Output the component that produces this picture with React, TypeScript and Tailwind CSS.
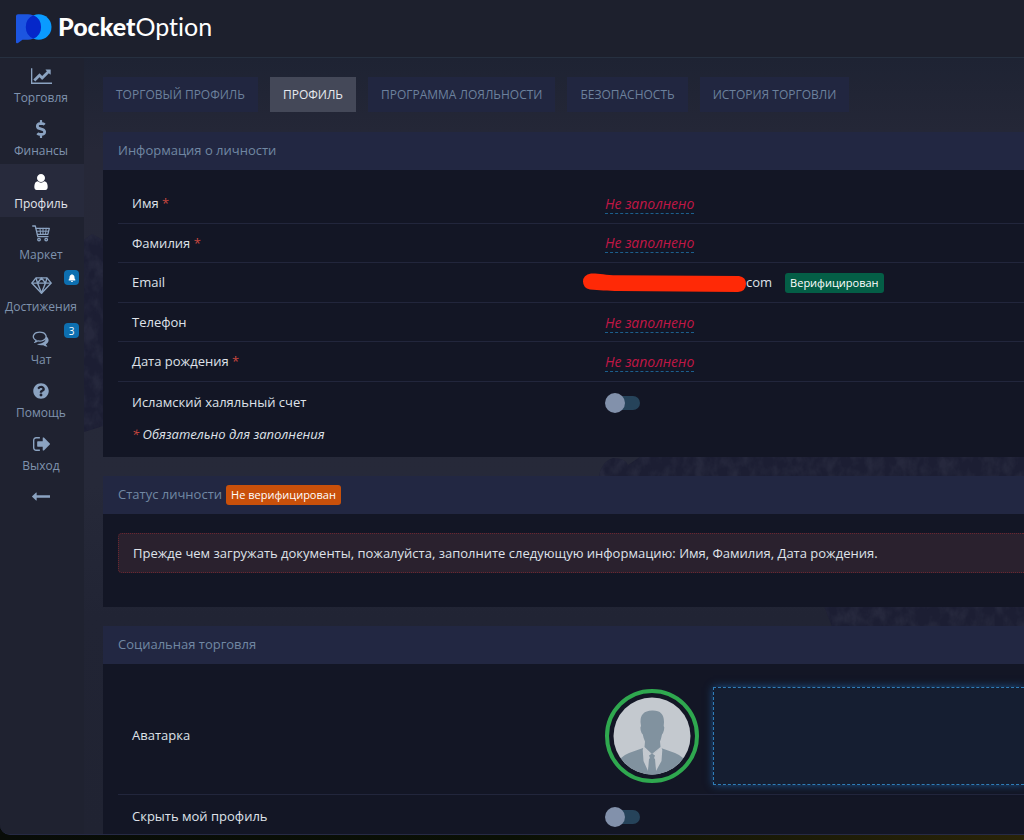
import React from "react";
import { FaBell, FaDollarSign, FaQuestionCircle } from "react-icons/fa";

type GlyphProps = { d: string; box: string; className: string };

function Glyph({ d, box, className }: GlyphProps) {
  return (
    <svg viewBox={box} className={className} fill="currentColor" aria-hidden="true">
      <path d={d} />
    </svg>
  );
}

const CHART =
  "M1920 1536v128h-2048v-1536h128v1408h1920zm-128-1248v435q0 21-19.5 29.5t-35.5-7.5l-121-121-633 633q-10 10-23 10t-23-10l-233-233-416 416-192-192 585-585q10-10 23-10t23 10l233 233 464-464-121-121q-16-16-7.5-35.5t29.5-19.5h435q14 0 23 9t9 23z";
const USER =
  "M1536 1399q0 109-62.5 187t-150.5 78h-854q-88 0-150.5-78t-62.5-187q0-85 8.5-160.5t31.5-152 58.5-131 94-89 134.5-34.5q131 128 313 128t313-128q76 0 134.5 34.5t94 89 58.5 131 31.5 152 8.5 160.5zm-256-887q0 159-112.5 271.5t-271.5 112.5-271.5-112.5-112.5-271.5 112.5-271.5 271.5-112.5 271.5 112.5 112.5 271.5z";
const CHAT =
  "M768 384q-153 0-286 52t-211.5 141-78.5 191q0 82 53 158t149 132l97 56-35 84q34-20 62-39l44-31 53 10q78 14 153 14 153 0 286-52t211.5-141 78.5-191-78.5-191-211.5-141-286-52zm0-128q191 0 353.5 68.5t256.5 186.5 94 257-94 257-256.5 186.5-353.5 68.5q-86 0-176-16-124 88-278 128-36 9-86 16h-3q-11 0-20.5-8t-11.5-21q-1-3-1-6.5t.5-6.5 2-6l2.5-5 3.5-5.5 4-5 4.5-5 4-4.5q5-6 23-25t26-29.5 22.5-29 25-38.5 20.5-44q-124-72-195-177t-71-224q0-139 94-257t256.5-186.5 353.5-68.5zm616 1276q10 24 20.5 44t25 38.5 22.5 29 26 29.5 23 25q1 1 4 4.5t4.5 5 4 5 3.5 5.5l2.5 5t2 6 .5 6.5-1 6.5q-3 14-13 22t-22 7q-50-7-86-16-154-40-278-128-90 16-176 16-271 0-472-132 58 4 88 4 161 0 309-45t264-129q125-92 192-212t67-254q0-77-23-152 129 71 204 178t75 230q0 120-71 224.5t-195 176.5z";
const EXIT =
  "M704 1440q0 4 1 20t.5 26.5-3 23.5-10 19.5-20.5 6.5h-320q-119 0-203.5-84.5t-84.5-203.5v-704q0-119 84.5-203.5t203.5-84.5h320q13 0 22.5 9.5t9.5 22.5q0 4 1 20t.5 26.5-3 23.5-10 19.5-20.5 6.5h-320q-66 0-113 47t-47 113v704q0 66 47 113t113 47h312l11.5 1 11.5 3 8 5.5 7 9 2 13.5zm928-544q0 26-19 45l-544 544q-19 19-45 19t-45-19-19-45v-288h-448q-26 0-45-19t-19-45v-384q0-26 19-45t45-19h448v-288q0-26 19-45t45-19 45 19l544 544q19 19 19 45z";
const ARROW =
  "M1792 832v192q0 14-9 23t-23 9h-1248v224q0 21-19 29t-35-5l-384-350q-10-10-10-23 0-14 10-24l384-354q16-14 35-6 19 9 19 29v224h1248q14 0 23 9t9 23z";

function Diamond() {
  return (
    <svg viewBox="0 0 21 17" className="h-[17px] w-[21px]" fill="none" stroke="currentColor" strokeWidth="1.4" strokeLinejoin="round" aria-hidden="true">
      <path d="M5 .9h11l4.2 5.2L10.5 16.2.8 6.100z" />
      <path d="M.8 6.100h19.400M5 .9l1.500 5.200 4 10 4-10L16 .9M6.500 6.100l4-5.100 4 5.100" />
    </svg>
  );
}

function Cart() {
  return (
    <svg viewBox="0 0 18 17" className="h-[17px] w-[18px]" fill="none" stroke="currentColor" strokeWidth="1.3" strokeLinecap="round" strokeLinejoin="round" aria-hidden="true">
      <path d="M.7 1h2.600l2.500 10.600h10.200" />
      <path d="M4 3.300h13.300l-1.500 6H5.400" />
      <path d="M4.700 6.200h11.800M8 3.300l.5 6M11 3.300v6M14.200 3.300l-.7 6" strokeWidth="1" />
      <circle cx="7" cy="14.600" r="1.300" />
      <circle cx="14.200" cy="14.600" r="1.300" />
    </svg>
  );
}

type NavItem = { label: string; icon: React.ReactNode; badge?: React.ReactNode; active?: boolean; short?: boolean };

const NAV: NavItem[] = [
  { label: "Торговля", icon: <Glyph d={CHART} box="-128 128 2048 1536" className="h-4 w-[21px]" /> },
  { label: "Финансы", icon: <FaDollarSign className="size-[18px]" /> },
  { label: "Профиль", icon: <Glyph d={USER} box="256 128 1280 1536" className="h-4 w-[14px]" />, active: true },
  { label: "Маркет", icon: <Cart />, short: true },
  { label: "Достижения", icon: <Diamond />, badge: <FaBell className="size-2" /> },
  { label: "Чат", icon: <Glyph d={CHAT} box="0 128 1792 1664" className="h-[17px] w-[18px]" />, badge: "3" },
  { label: "Помощь", icon: <FaQuestionCircle className="size-4" /> },
  { label: "Выход", icon: <Glyph d={EXIT} box="64 256 1568 1280" className="h-[14px] w-[17px]" /> },
];

function Sidebar() {
  return (
    <nav className="flex w-[84px] shrink-0 flex-col bg-[#1f2230] text-[#8ba3c1]">
      {NAV.map((n) => (
        <a
          key={n.label}
          href="#"
          className={`relative flex flex-col items-center gap-[3px] pr-[2px] ${n.short ? "h-[50px] pt-[7px]" : "h-[53px] pt-[9px]"} ${n.active ? "bg-[#272a3c] text-white" : ""}`}
        >
          <span className="flex h-[18px] items-center">{n.icon}</span>
          <span className={`text-xs leading-5 ${n.active ? "text-[#e4e7ee]" : "text-[#7f93ae]"}`}>{n.label}</span>
          {n.badge && (
            <span className="absolute top-[3px] right-[5px] flex h-[15px] w-[15px] items-center justify-center rounded bg-[#0d6fb0] text-[10px] leading-none text-white">
              {n.badge}
            </span>
          )}
        </a>
      ))}
      <button type="button" aria-label="Свернуть" className="flex h-[34px] items-center justify-center pr-[2px]">
        <Glyph d={ARROW} box="64 512 1728 832" className="h-[9px] w-[18px]" />
      </button>
    </nav>
  );
}

function Logo() {
  return (
    <a href="#" className="flex items-center gap-[6px]">
      <svg viewBox="0 0 36 30" className="h-[30px] w-9" aria-hidden="true">
        <circle cx="22.700" cy="13" r="12.800" fill="#0a9bff" />
        <path d="M0 2Q0 .2 2 .2h10a12.800 12.800 0 0 1 0 25.600H6.500L2 29Q0 30 0 28z" fill="#1c55e0" />
        <path d="M17.400 1.300a12.800 12.800 0 0 1 0 23.400a12.800 12.800 0 0 1 0-23.400z" fill="#0527c9" />
      </svg>
      <span className="pb-[5px] font-[Lato,sans-serif] text-[25px] leading-[30px] text-white [font-variant-ligatures:none]">
        <span className="font-black">Pocket</span>
        <span className="font-normal">Option</span>
      </span>
    </a>
  );
}

const TABS = ["Торговый профиль", "Профиль", "Программа лояльности", "Безопасность", "История торговли"];

function Panel({ title, badge, children }: { title: string; badge?: string; children: React.ReactNode }) {
  return (
    <section className="relative">
      <h2 className="flex h-[38px] items-center gap-1 bg-[#222742] px-[15px] text-[#7187a3]">
        {title}
        {badge && <span className="rounded-[3px] bg-[#c9500a] px-[5px] text-[11px] leading-5 text-white">{badge}</span>}
      </h2>
      <div className="bg-[#131625] pl-[15px]">{children}</div>
    </section>
  );
}

function Empty() {
  return (
    <button type="button" className="border-b border-dashed border-[#1c5f8d] text-sm leading-[19px] text-[#c01745] italic">
      Не заполнено
    </button>
  );
}

function Toggle({ id }: { id: string }) {
  return (
    <input
      id={id}
      type="checkbox"
      role="switch"
      className="relative block h-5 w-[35px] appearance-none before:absolute before:top-[3px] before:right-0 before:h-[14px] before:w-[30px] before:rounded-full before:bg-[#26435a] after:absolute after:top-0 after:left-0 after:size-5 after:rounded-full after:bg-[#8291ab]"
    />
  );
}

function Email() {
  return (
    <span className="relative flex items-center gap-[13px] pl-[141px]">
      <svg viewBox="0 0 164 20" className="absolute top-0 -left-[22px] h-5 w-[164px]" aria-hidden="true">
        <path d="M8 .5C14 0 22 2 34 2.200L156 3q7 1 7 8t-8 8L36 18C24 18 16 17 7 16.500Q0 15 0 8.500T8 .5z" fill="#ff2906" />
      </svg>
      com
      <span className="rounded-[3px] bg-[#045e46] px-[5px] text-[11px] leading-5 text-white">Верифицирован</span>
    </span>
  );
}

const ROWS: { label: string; required?: boolean; value: React.ReactNode }[] = [
  { label: "Имя", required: true, value: <Empty /> },
  { label: "Фамилия", required: true, value: <Empty /> },
  { label: "Email", value: <Email /> },
  { label: "Телефон", value: <Empty /> },
  { label: "Дата рождения", required: true, value: <Empty /> },
];

const RIDGE = "M0 182l8-6 11 6V368L0 374zM515 418q3-15 14-18 12 0 15 7l12-8 40-4H940V777H830L740 548l-60-20-165-90z";

function Backdrop() {
  return (
    <svg className="absolute inset-0 h-full w-full" viewBox="0 0 940 777" preserveAspectRatio="xMinYMin slice" aria-hidden="true">
      <defs>
        <linearGradient id="sky" x1="0" y1="0" x2="0" y2="1">
          <stop offset="0" stopColor="#1e2333" />
          <stop offset=".12" stopColor="#262838" />
          <stop offset=".55" stopColor="#262939" />
          <stop offset=".72" stopColor="#212434" />
          <stop offset="1" stopColor="#202332" />
        </linearGradient>
        <filter id="rock" x="0" y="0" width="1" height="1" colorInterpolationFilters="sRGB">
          <feTurbulence type="fractalNoise" baseFrequency=".09 .06" numOctaves="4" seed="4" />
          <feColorMatrix values="0 0 0 0 .18  0 0 0 0 .19  0 0 0 0 .27  0 2.400 0 0 -.9" />
          <feComposite in2="SourceGraphic" operator="in" />
        </filter>
      </defs>
      <rect width="940" height="777" fill="url(#sky)" />
      <path d={RIDGE} fill="#1c1e33" />
      <path d={RIDGE} filter="url(#rock)" opacity=".6" />
    </svg>
  );
}

function Avatar() {
  return (
    <svg viewBox="0 0 94 94" className="size-[94px] shrink-0" role="img" aria-label="Аватарка">
      <defs>
        <clipPath id="face">
          <circle cx="47" cy="47" r="38.500" />
        </clipPath>
      </defs>
      <circle cx="47" cy="47" r="45" fill="none" stroke="#2fa84f" strokeWidth="4" />
      <g clipPath="url(#face)">
        <rect width="94" height="94" fill="#c4c9cf" />
        <path d="M38 59l-14 5q-5 2-8 5v19h62V69q-3-3-8-5l-14-5-9 7z" fill="#81929f" />
        <path d="M38.500 58l-.8 3 .8 11 4.500 10 1-12 3-3 3 3 1 12 5.500-10 .8-11-1-3-9.300 8z" fill="#c4c9cf" />
        <path d="M44 66.500l3-2 3 2-1.500 4L51 82v6h-8v-6l2.500-11.500z" fill="#81929f" />
        <path d="M35.500 33Q35 22 47 21.500T59 33l-.3 4q1 1 .3 4t-2 4.500q-1 5-2 7l.5 5.500L47 65l-7.500-7 .5-5.500q-1.500-3-2.200-7-1.600-1.500-2.200-4.500t.4-4z" fill="#81929f" />
      </g>
    </svg>
  );
}

export default function App() {
  return (
    <div className="min-h-screen overflow-hidden bg-linear-to-r from-[#080c08] via-[#0a1005] to-[#2a2408] pb-[5px] font-['Open_Sans','Noto_Sans',sans-serif] text-[13px] text-[#dfe2e9]">
      <div className="overflow-hidden rounded-bl-[10px] border-b border-[#262a45] bg-[#1f2230]">
        <header className="flex h-[58px] items-center border-b border-[#263040] bg-[#1d202d] pr-4 pl-4">
          <Logo />
        </header>
        <div className="flex">
          <Sidebar />
          <main className="relative min-w-0 flex-1 pt-[19px] pl-[19px]">
            <Backdrop />
            <div className="relative flex gap-3 whitespace-nowrap">
              {TABS.map((t, i) => (
                <a
                  key={t}
                  href="#"
                  className={`px-[13px] text-xs leading-[35px] uppercase ${i === 1 ? "bg-[#444858] text-[#e8eaef]" : "bg-[#212640] text-[#6c819d]"}`}
                >
                  {t}
                </a>
              ))}
            </div>
            <div className="mt-5 flex flex-col gap-[19px]">
              <Panel title="Информация о личности">
                <dl className="grid h-[212px] grid-rows-5 pt-[14px]">
                  {ROWS.map((r) => (
                    <div key={r.label} className="grid grid-cols-[473px_1fr] items-center border-b border-[#22263c] pt-px pl-[14px]">
                      <dt>
                        {r.label} {r.required && <span className="text-[#c9473f]">*</span>}
                      </dt>
                      <dd className="flex">{r.value}</dd>
                    </div>
                  ))}
                </dl>
                <div className="grid h-[42px] grid-cols-[473px_1fr] items-center pl-[14px]">
                  <label htmlFor="halal">Исламский халяльный счет</label>
                  <Toggle id="halal" />
                </div>
                <p className="h-[33px] pl-[14px] leading-5 italic">
                  <span className="text-[#c9473f]">*</span> Обязательно для заполнения
                </p>
              </Panel>
              <Panel title="Статус личности" badge="Не верифицирован">
                <div className="pt-[19px] pb-[34px]">
                  <p role="alert" className="rounded-l border border-r-0 border-dotted border-[#6b2630] bg-[#2a212e] px-[14px] leading-[38px]">
                    Прежде чем загружать документы, пожалуйста, заполните следующую информацию: Имя, Фамилия, Дата рождения.
                  </p>
                </div>
              </Panel>
              <Panel title="Социальная торговля">
                <div className="grid h-[131px] grid-cols-[473px_1fr] items-center border-b border-[#22263c] pt-[14px] pl-[14px]">
                  <label htmlFor="avatar">Аватарка</label>
                  <div className="flex items-center gap-[14px]">
                    <Avatar />
                    <button
                      id="avatar"
                      type="button"
                      aria-label="Загрузить"
                      className="h-[98px] flex-1 border border-r-0 border-dashed border-[#2f7db8] bg-[#151e31] shadow-[0_0_8px_#1c4f86]"
                    />
                  </div>
                </div>
                <div className="grid h-[39px] grid-cols-[473px_1fr] items-center pt-1 pl-[14px]">
                  <label htmlFor="hide">Скрыть мой профиль</label>
                  <Toggle id="hide" />
                </div>
              </Panel>
            </div>
          </main>
        </div>
      </div>
    </div>
  );
}
